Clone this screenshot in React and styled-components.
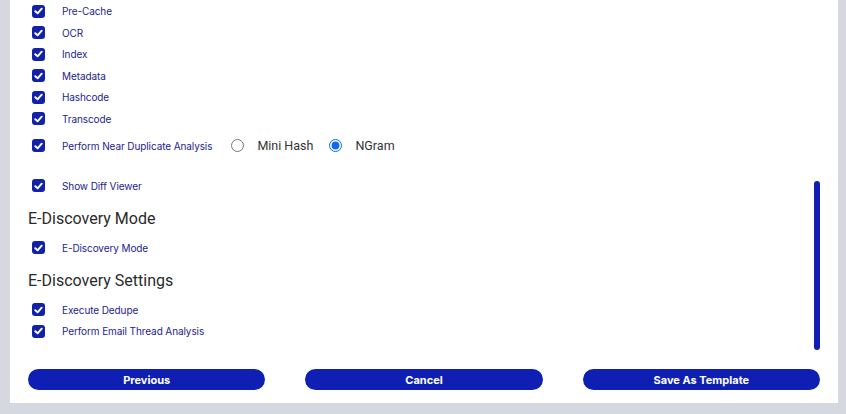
import React from 'react';
import styled, { createGlobalStyle } from 'styled-components';

const GlobalStyle = createGlobalStyle`
  html, body {
    margin: 0;
    padding: 0;
    background: #d5d8df;
  }
  * {
    box-sizing: border-box;
  }
`;

const Page = styled.div`
  width: 846px;
  height: 414px;
  padding: 0 8px 11px 10px;
  background: #d5d8df;
`;

const Panel = styled.div`
  height: 100%;
  background: #ffffff;
  display: flex;
  flex-direction: column;
`;

const Body = styled.div`
  flex: 1;
  position: relative;
  padding: 0.25px 18px 0;
  overflow: hidden;
`;

const ScrollThumb = styled.div`
  position: absolute;
  top: 181px;
  right: 18px;
  width: 6px;
  height: 169px;
  border-radius: 3px;
  background: #0f1fb3;
`;

const Row = styled.label`
  display: flex;
  align-items: center;
  height: ${({ tall }) => (tall ? '32.5px' : '21.5px')};
  margin-top: ${({ gapTop }) => gapTop || 0}px;
  padding-left: 4px;
`;

const Box = styled.span`
  width: 13px;
  height: 13px;
  border-radius: 3px;
  background: #1222a8;
  display: flex;
  align-items: center;
  justify-content: center;
  flex-shrink: 0;
`;

const Label = styled.span`
  margin-left: 17px;
  font-family: Inter, "Liberation Sans", sans-serif;
  font-size: 10px;
  letter-spacing: -0.1px;
  color: #23238f;
`;

const RadioGroup = styled.div`
  display: flex;
  align-items: center;
  margin-left: 19px;
`;

const RadioOption = styled.span`
  display: flex;
  align-items: center;
  margin-right: 16px;
`;

const Radio = styled.input`
  width: 13px;
  height: 13px;
  margin: 0;
  accent-color: #0b6cf0;
`;

const RadioText = styled.span`
  margin-left: 13px;
  font-family: Roboto, "Liberation Sans", sans-serif;
  font-size: 12.5px;
  color: #333;
`;

const Heading = styled.div`
  margin: 12.25px 0 8.25px;
  line-height: 20px;
  font-family: Roboto, "Liberation Sans", sans-serif;
  font-size: 16px;
  color: #2a2a2a;
`;

const Footer = styled.div`
  display: grid;
  grid-template-columns: repeat(3, 1fr);
  gap: 40px;
  padding: 0 18px 13px;
`;

const Button = styled.button`
  height: 21px;
  border: none;
  border-radius: 11px;
  background: #0f1fb3;
  color: #fff;
  font-family: Inter, "Liberation Sans", sans-serif;
  font-weight: 700;
  font-size: 11px;
  padding: 0;
  cursor: pointer;
`;

const Check = () => (
  <Box>
    <svg width="9" height="8" viewBox="0 0 9 8">
      <path d="M1.3 4.2 L3.6 6.3 L7.7 1.7" fill="none" stroke="#fff" strokeWidth="1.9" strokeLinecap="round" strokeLinejoin="round" />
    </svg>
  </Box>
);

const Item = ({ children, ...rest }) => (
  <Row {...rest}>
    <Check />
    <Label>{children}</Label>
  </Row>
);

const steps = ['Pre-Cache', 'OCR', 'Index', 'Metadata', 'Hashcode', 'Transcode'];

export default function App() {
  return (
    <>
      <GlobalStyle />
      <Page>
        <Panel>
          <Body>
            {steps.map((s) => (
              <Item key={s}>{s}</Item>
            ))}
            <Row tall>
              <Check />
              <Label>Perform Near Duplicate Analysis</Label>
              <RadioGroup>
                <RadioOption>
                  <Radio type="radio" name="dup" readOnly />
                  <RadioText>Mini Hash</RadioText>
                </RadioOption>
                <RadioOption>
                  <Radio type="radio" name="dup" defaultChecked />
                  <RadioText>NGram</RadioText>
                </RadioOption>
              </RadioGroup>
            </Row>
            <Item gapTop={13}>Show Diff Viewer</Item>
            <Heading>E-Discovery Mode</Heading>
            <Item>E-Discovery Mode</Item>
            <Heading>E-Discovery Settings</Heading>
            <Item>Execute Dedupe</Item>
            <Item>Perform Email Thread Analysis</Item>
            <ScrollThumb />
          </Body>
          <Footer>
            <Button>Previous</Button>
            <Button>Cancel</Button>
            <Button>Save As Template</Button>
          </Footer>
        </Panel>
      </Page>
    </>
  );
}
